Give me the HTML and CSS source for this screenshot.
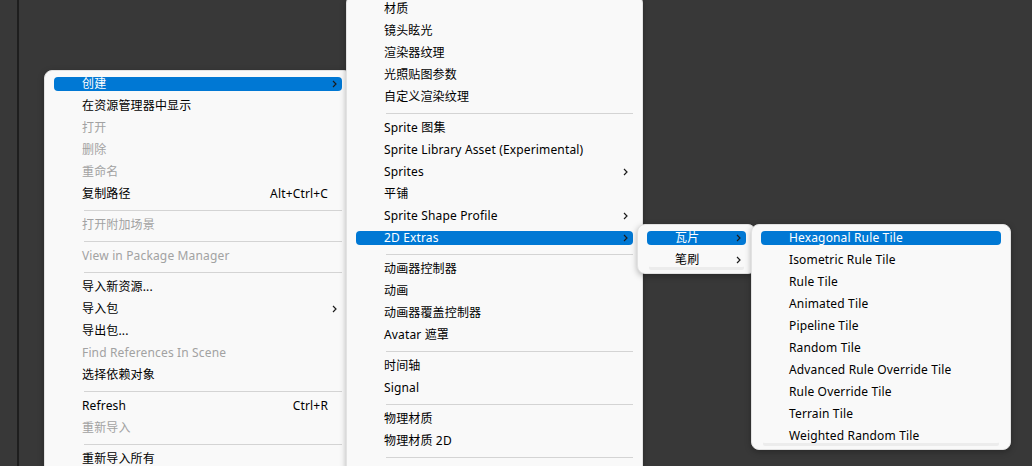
FILE: index.html
```html
<!DOCTYPE html>
<html lang="zh-CN">
<head>
<meta charset="utf-8">
<title>Context menu</title>
<link rel="stylesheet" href="styles.css">
</head>
<body>
<div class="desk">
  <div class="rule"></div>

  <div class="menu menu-main">
    <div class="item active"><span class="label">创建</span><svg class="chev" viewBox="0 0 5 8" width="5" height="8"><path d="M1 1l3 3-3 3"/></svg></div>
    <div class="item"><span class="label">在资源管理器中显示</span></div>
    <div class="item disabled"><span class="label">打开</span></div>
    <div class="item disabled"><span class="label">删除</span></div>
    <div class="item disabled"><span class="label">重命名</span></div>
    <div class="item"><span class="label">复制路径</span><span class="key">Alt+Ctrl+C</span></div>
    <div class="sep"></div>
    <div class="item disabled"><span class="label">打开附加场景</span></div>
    <div class="sep"></div>
    <div class="item disabled"><span class="label">View in Package Manager</span></div>
    <div class="sep"></div>
    <div class="item"><span class="label">导入新资源...</span></div>
    <div class="item"><span class="label">导入包</span><svg class="chev" viewBox="0 0 5 8" width="5" height="8"><path d="M1 1l3 3-3 3"/></svg></div>
    <div class="item"><span class="label">导出包...</span></div>
    <div class="item disabled"><span class="label">Find References In Scene</span></div>
    <div class="item"><span class="label">选择依赖对象</span></div>
    <div class="sep"></div>
    <div class="item"><span class="label">Refresh</span><span class="key">Ctrl+R</span></div>
    <div class="item disabled"><span class="label">重新导入</span></div>
    <div class="sep"></div>
    <div class="item"><span class="label">重新导入所有</span></div>
  </div>

  <div class="menu menu-create">
    <div class="item"><span class="label">材质</span></div>
    <div class="item"><span class="label">镜头眩光</span></div>
    <div class="item"><span class="label">渲染器纹理</span></div>
    <div class="item"><span class="label">光照贴图参数</span></div>
    <div class="item"><span class="label">自定义渲染纹理</span></div>
    <div class="sep"></div>
    <div class="item"><span class="label">Sprite 图集</span></div>
    <div class="item"><span class="label">Sprite Library Asset (Experimental)</span></div>
    <div class="item"><span class="label">Sprites</span><svg class="chev" viewBox="0 0 5 8" width="5" height="8"><path d="M1 1l3 3-3 3"/></svg></div>
    <div class="item"><span class="label">平铺</span></div>
    <div class="item"><span class="label">Sprite Shape Profile</span><svg class="chev" viewBox="0 0 5 8" width="5" height="8"><path d="M1 1l3 3-3 3"/></svg></div>
    <div class="item active"><span class="label">2D Extras</span><svg class="chev" viewBox="0 0 5 8" width="5" height="8"><path d="M1 1l3 3-3 3"/></svg></div>
    <div class="sep"></div>
    <div class="item"><span class="label">动画器控制器</span></div>
    <div class="item"><span class="label">动画</span></div>
    <div class="item"><span class="label">动画器覆盖控制器</span></div>
    <div class="item"><span class="label">Avatar 遮罩</span></div>
    <div class="sep"></div>
    <div class="item"><span class="label">时间轴</span></div>
    <div class="item"><span class="label">Signal</span></div>
    <div class="sep"></div>
    <div class="item"><span class="label">物理材质</span></div>
    <div class="item"><span class="label">物理材质 2D</span></div>
    <div class="sep"></div>
  </div>

  <div class="menu menu-extras">
    <div class="item active"><span class="label">瓦片</span><svg class="chev" viewBox="0 0 5 8" width="5" height="8"><path d="M1 1l3 3-3 3"/></svg></div>
    <div class="item last"><span class="label">笔刷</span><svg class="chev" viewBox="0 0 5 8" width="5" height="8"><path d="M1 1l3 3-3 3"/></svg></div>
  </div>

  <div class="menu menu-tiles">
    <div class="item active"><span class="label">Hexagonal Rule Tile</span></div>
    <div class="item"><span class="label">Isometric Rule Tile</span></div>
    <div class="item"><span class="label">Rule Tile</span></div>
    <div class="item"><span class="label">Animated Tile</span></div>
    <div class="item"><span class="label">Pipeline Tile</span></div>
    <div class="item"><span class="label">Random Tile</span></div>
    <div class="item"><span class="label">Advanced Rule Override Tile</span></div>
    <div class="item"><span class="label">Rule Override Tile</span></div>
    <div class="item"><span class="label">Terrain Tile</span></div>
    <div class="item last"><span class="label">Weighted Random Tile</span></div>
  </div>
</div>
</body>
</html>
```

FILE: styles.css
```css
* {
  box-sizing: border-box;
}

html,
body {
  margin: 0;
  padding: 0;
}

body {
  background: #383838;
  font-family: "Noto Sans", "Noto Sans CJK SC", sans-serif;
  font-size: 12px;
  letter-spacing: 0.15px;
  color: #000;
}

.desk {
  position: relative;
  width: 1032px;
  height: 466px;
  overflow: hidden;
  background: #383838;
}

.rule {
  position: absolute;
  left: 17px;
  top: 0;
  width: 2px;
  height: 100%;
  background: #1e1e1e;
}

.menu {
  position: absolute;
  display: flex;
  flex-direction: column;
  background: #f9f9f9;
  border: 1px solid #e2e2e2;
  border-radius: 8px;
  padding: 2px 0 3px;
  box-shadow: 0 2px 6px rgba(0, 0, 0, 0.28);
}

.item {
  position: relative;
  display: flex;
  align-items: center;
  flex: none;
  height: 14px;
  margin: 4px 9px;
  padding: 0 5px 0 28px;
  border-radius: 4px;
  white-space: nowrap;
  line-height: 14px;
}

.item .label {
  flex: 1;
}

.item.active {
  background: #0078d4;
  color: #fff;
}

.item.disabled {
  color: #a2a2a2;
}

.key {
  margin-right: 9px;
}

.chev {
  flex: none;
}

.chev path {
  fill: none;
  stroke: #1c1c1c;
  stroke-width: 1.2;
}

.sep {
  height: 1px;
  margin: 5px 9px 3px 39px;
  background: #d4d4d4;
  flex: none;
}

.item.last {
  box-shadow: 0 5px 0 -2px #ececec;
}

.item.last.active {
  box-shadow: none;
}

.menu-main {
  left: 44px;
  top: 70px;
  width: 308px;
  height: 420px;
}

.menu-create {
  left: 346px;
  top: -5px;
  width: 297px;
  height: 520px;
}

.menu-extras {
  left: 637px;
  top: 224px;
  width: 119px;
  height: 50px;
}

.menu-tiles {
  left: 751px;
  top: 224px;
  width: 260px;
  height: 226px;
}
```
